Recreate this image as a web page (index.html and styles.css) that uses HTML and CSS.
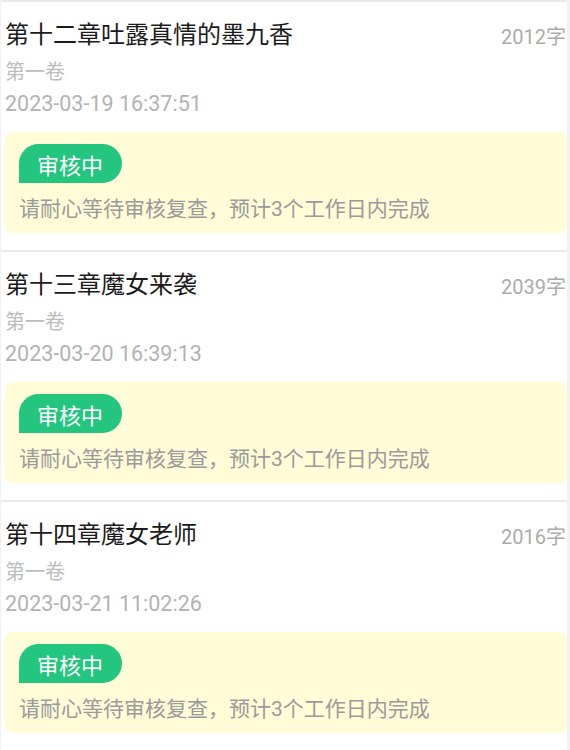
FILE: index.html
```html
<!DOCTYPE html>
<html lang="zh-CN">
<head>
<meta charset="utf-8">
<title>章节审核</title>
<link rel="stylesheet" href="styles.css">
</head>
<body>
<div class="list">
  <div class="item">
    <div class="head">
      <div class="title">第十二章吐露真情的墨九香</div>
      <div class="count">2012字</div>
    </div>
    <div class="volume">第一卷</div>
    <div class="date">2023-03-19 16:37:51</div>
    <div class="notice">
      <span class="badge">审核中</span>
      <div class="msg">请耐心等待审核复查，预计3个工作日内完成</div>
    </div>
  </div>
  <div class="item">
    <div class="head">
      <div class="title">第十三章魔女来袭</div>
      <div class="count">2039字</div>
    </div>
    <div class="volume">第一卷</div>
    <div class="date">2023-03-20 16:39:13</div>
    <div class="notice">
      <span class="badge">审核中</span>
      <div class="msg">请耐心等待审核复查，预计3个工作日内完成</div>
    </div>
  </div>
  <div class="item">
    <div class="head">
      <div class="title">第十四章魔女老师</div>
      <div class="count">2016字</div>
    </div>
    <div class="volume">第一卷</div>
    <div class="date">2023-03-21 11:02:26</div>
    <div class="notice">
      <span class="badge">审核中</span>
      <div class="msg">请耐心等待审核复查，预计3个工作日内完成</div>
    </div>
  </div>
</div>
</body>
</html>
```
FILE: styles.css
```css
html, body {
  margin: 0;
  padding: 0;
  background: #f1f1f1;
  font-family: Roboto, "Noto Sans CJK SC", sans-serif;
}
.list {
  margin: 0 3px 0 1px;
}
.item {
  background: #fff;
  border-top: 2px solid #e9e9e9;
  padding: 16px 0 17px 4px;
}
.head {
  display: flex;
  justify-content: space-between;
  align-items: center;
  height: 34px;
}
.title {
  font-size: 24px;
  line-height: 34px;
  color: #1b1b1b;
}
.count {
  font-size: 20px;
  color: #ababab;
  padding-right: 1px;
}
.volume {
  margin-top: 7px;
  font-size: 20px;
  line-height: 26px;
  color: #bcbcbc;
}
.date {
  margin-top: 6px;
  font-size: 21.5px;
  line-height: 26px;
  color: #b3b3b3;
}
.notice {
  margin-top: 15px;
  background: #fffcd7;
  border-radius: 8px;
  padding: 12px 14px 11px 14px;
}
.badge {
  display: inline-flex;
  align-items: center;
  height: 39px;
  padding: 0 19px 0 18px;
  background: #24c67f;
  color: #fff;
  font-size: 22px;
  border-radius: 20px 20px 20px 0;
}
.msg {
  margin-top: 13px;
  font-size: 21px;
  line-height: 26px;
  color: #9a9a9a;
}
```
